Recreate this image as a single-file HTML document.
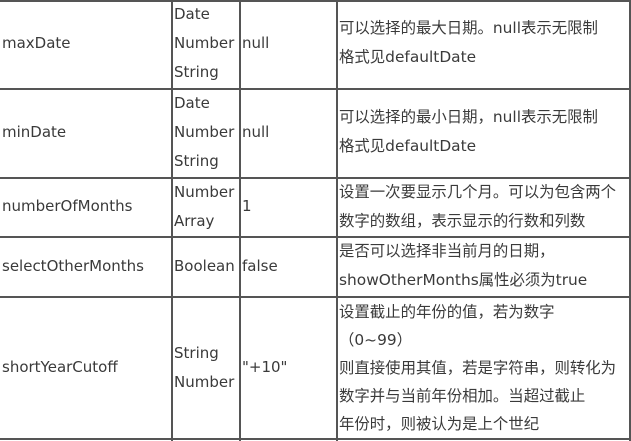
<!DOCTYPE html>
<html><head><meta charset="utf-8"><style>
body{margin:0;width:631px;height:441px;background:#fff;position:relative;overflow:hidden;font-family:"DejaVu Sans","Noto Sans CJK SC",sans-serif;font-size:15px;color:#3a3a3a}
.h{position:absolute;left:0;width:631px;height:2px;background:#555}
.v{position:absolute;top:0;width:2px;height:441px;background:#555}
.t{position:absolute;white-space:nowrap;line-height:29px}
.c{font-size:15.4px}
</style></head><body>
<div class="h" style="top:0"></div><div class="h" style="top:88px"></div><div class="h" style="top:177px"></div><div class="h" style="top:236px"></div><div class="h" style="top:296px"></div><div class="h" style="top:438px"></div>
<div class="v" style="left:171px"></div><div class="v" style="left:239px"></div><div class="v" style="left:336px"></div><div class="v" style="left:629px"></div>

<div class="t" style="left:2px;top:29px">maxDate</div>
<div class="t" style="left:174px;top:0">Date<br>Number<br>String</div>
<div class="t" style="left:242px;top:29px">null</div>
<div class="t c" style="left:339px;top:14px">可以选择的最大日期。null表示无限制<br>格式见defaultDate</div>

<div class="t" style="left:2px;top:118px">minDate</div>
<div class="t" style="left:174px;top:89px">Date<br>Number<br>String</div>
<div class="t" style="left:242px;top:118px">null</div>
<div class="t c" style="left:339px;top:103px">可以选择的最小日期，null表示无限制<br>格式见defaultDate</div>

<div class="t" style="left:2px;top:192px">numberOfMonths</div>
<div class="t" style="left:174px;top:178px">Number<br>Array</div>
<div class="t" style="left:242px;top:192px">1</div>
<div class="t c" style="left:339px;top:178px">设置一次要显示几个月。可以为包含两个<br>数字的数组，表示显示的行数和列数</div>

<div class="t" style="left:2px;top:252px">selectOtherMonths</div>
<div class="t" style="left:174px;top:252px">Boolean</div>
<div class="t" style="left:242px;top:252px">false</div>
<div class="t c" style="left:339px;top:237px">是否可以选择非当前月的日期，<br>showOtherMonths属性必须为true</div>

<div class="t" style="left:2px;top:353px">shortYearCutoff</div>
<div class="t" style="left:174px;top:339px">String<br>Number</div>
<div class="t" style="left:242px;top:353px">"+10"</div>
<div class="t c" style="left:339px;top:298px;line-height:28px">设置截止的年份的值，若为数字<br>（0~99）<br>则直接使用其值，若是字符串，则转化为<br>数字并与当前年份相加。当超过截止<br>年份时，则被认为是上个世纪</div>
</body></html>
